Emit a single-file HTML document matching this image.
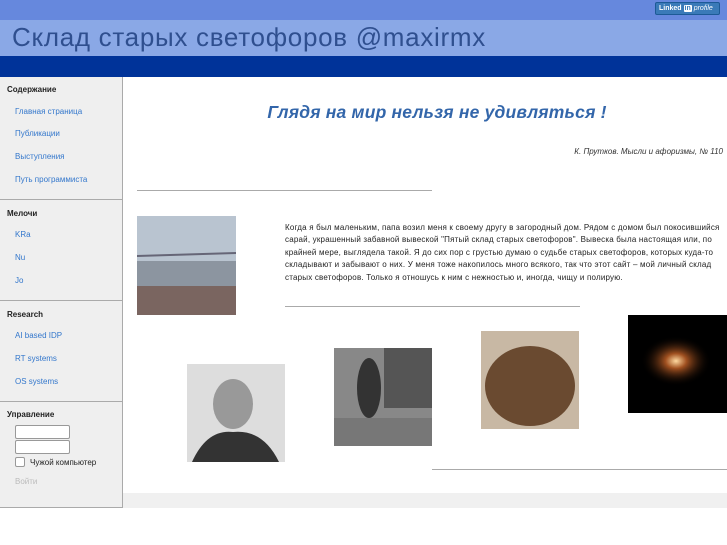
<!DOCTYPE html>
<html><head><meta charset="utf-8"><style>
*{margin:0;padding:0;box-sizing:border-box}
body{width:727px;height:545px;background:#fff;font-family:"Liberation Sans","DejaVu Sans",sans-serif;position:relative;overflow:hidden}
.a{position:absolute}
.top{left:0;top:0;width:727px;height:20px;background:#6688dd}
.hdr{left:0;top:20px;width:727px;height:36px;background:#8aa8e6}
.band{left:0;top:56px;width:727px;height:21px;background:#003399}
.title{left:12px;top:20px;font-size:26px;letter-spacing:0.7px;color:#2f4f8f;line-height:34px;white-space:nowrap}
.li{left:655px;top:2px;width:65px;height:13px;background:#3a7ab8;border:1px solid #1d5a96;border-radius:2px;font-size:7px;color:#fff;font-weight:bold;line-height:11px;padding-left:3px;white-space:nowrap;overflow:hidden}
.li span{background:#fff;color:#3a7ab8;padding:0 1px;border-radius:1px}
.side{left:0;top:77px;width:123px;height:431px;background:#efefef;border-right:1px solid #aaa;border-bottom:1px solid #aaa}
.h{left:7px;font-size:8px;font-weight:bold;color:#222}
.l{left:15px;font-size:8px;color:#3377cc}
.sep{left:0;width:122px;height:1px;background:#aaa}
.inp{left:15px;width:55px;height:14px;background:#fff;border:1px solid #999;border-radius:2px}
.hr{height:1px;background:#aaa}
.img{position:absolute}
p.t{position:absolute;left:285px;top:222px;width:442px;font-size:8px;letter-spacing:0.2px;line-height:12.4px;color:#222}
</style></head><body>
<div class="a top"></div>
<div class="a li">Linked <span>in</span> <i style="font-weight:normal">profile</i></div>
<div class="a hdr"></div>
<div class="a title">Склад старых светофоров @maxirmx</div>
<div class="a band"></div>
<div class="a" style="left:123px;top:493px;width:604px;height:15px;background:#f0f0f0"></div>
<div class="a side"></div>
<div class="a h" style="top:85px">Содержание</div>
<div class="a l" style="top:107px">Главная страница</div>
<div class="a l" style="top:129px">Публикации</div>
<div class="a l" style="top:152px">Выступления</div>
<div class="a l" style="top:175px">Путь программиста</div>
<div class="a sep" style="top:199px"></div>
<div class="a h" style="top:209px">Мелочи</div>
<div class="a l" style="top:230px">KRa</div>
<div class="a l" style="top:253px">Nu</div>
<div class="a l" style="top:276px">Jo</div>
<div class="a sep" style="top:300px"></div>
<div class="a h" style="top:310px">Research</div>
<div class="a l" style="top:331px">AI based IDP</div>
<div class="a l" style="top:354px">RT systems</div>
<div class="a l" style="top:377px">OS systems</div>
<div class="a sep" style="top:401px"></div>
<div class="a h" style="top:410px">Управление</div>
<div class="a inp" style="top:425px"></div>
<div class="a inp" style="top:440px"></div>
<div class="a" style="left:15px;top:457px;width:10px;height:10px;background:#fff;border:1px solid #999;border-radius:2px"></div>
<div class="a" style="left:30px;top:458px;font-size:8px;color:#222">Чужой компьютер</div>
<div class="a" style="left:15px;top:477px;font-size:8px;color:#bbb">Войти</div>

<div class="a" style="left:123px;top:102px;width:628px;text-align:center;font-size:17.5px;letter-spacing:0.2px;font-weight:bold;font-style:italic;color:#3366aa">Глядя на мир нельзя не удивляться !</div>
<div class="a" style="right:4px;top:147px;font-size:8px;font-style:italic;color:#333">К. Прутков. Мысли и афоризмы, № 110</div>
<div class="a hr" style="left:137px;top:190px;width:295px"></div>
<svg class="img" style="left:137px;top:216px" width="99" height="99"><rect width="99" height="99" fill="#b9c4d0"/><rect y="45" width="99" height="54" fill="#8c95a0"/><rect y="70" width="99" height="29" fill="#7a6560"/><path d="M0 40 L99 37" stroke="#667" stroke-width="2"/></svg>
<p class="t">Когда я был маленьким, папа возил меня к своему другу в загородный дом. Рядом с домом был покосившийся сарай, украшенный забавной вывеской "Пятый склад старых светофоров". Вывеска была настоящая или, по крайней мере, выглядела такой. Я до сих пор с грустью думаю о судьбе старых светофоров, которых куда-то складывают и забывают о них. У меня тоже накопилось много всякого, так что этот сайт – мой личный склад старых светофоров. Только я отношусь к ним с нежностью и, иногда, чищу и полирую.</p>
<div class="a hr" style="left:285px;top:306px;width:295px"></div>
<svg class="img" style="left:187px;top:364px" width="98" height="98"><rect width="98" height="98" fill="#ddd"/><ellipse cx="46" cy="40" rx="20" ry="25" fill="#999"/><path d="M5 98 Q20 65 46 68 Q76 65 92 98Z" fill="#333"/></svg>
<svg class="img" style="left:334px;top:348px" width="98" height="98"><rect width="98" height="98" fill="#888"/><rect x="50" y="0" width="48" height="60" fill="#555"/><rect x="0" y="70" width="98" height="28" fill="#777"/><ellipse cx="35" cy="40" rx="12" ry="30" fill="#333"/></svg>
<svg class="img" style="left:481px;top:331px" width="98" height="98"><rect width="98" height="98" fill="#c8b8a4"/><ellipse cx="49" cy="55" rx="45" ry="40" fill="#6a4a30"/></svg>
<svg class="img" style="left:628px;top:315px" width="99" height="98"><rect width="99" height="98" fill="#000"/><radialGradient id="g"><stop offset="0" stop-color="#ffd9a0"/><stop offset=".3" stop-color="#a05020"/><stop offset="1" stop-color="#000" stop-opacity="0"/></radialGradient><ellipse cx="48" cy="46" rx="35" ry="25" fill="url(#g)"/></svg>
<div class="a hr" style="left:432px;top:469px;width:295px"></div>
</body></html>
